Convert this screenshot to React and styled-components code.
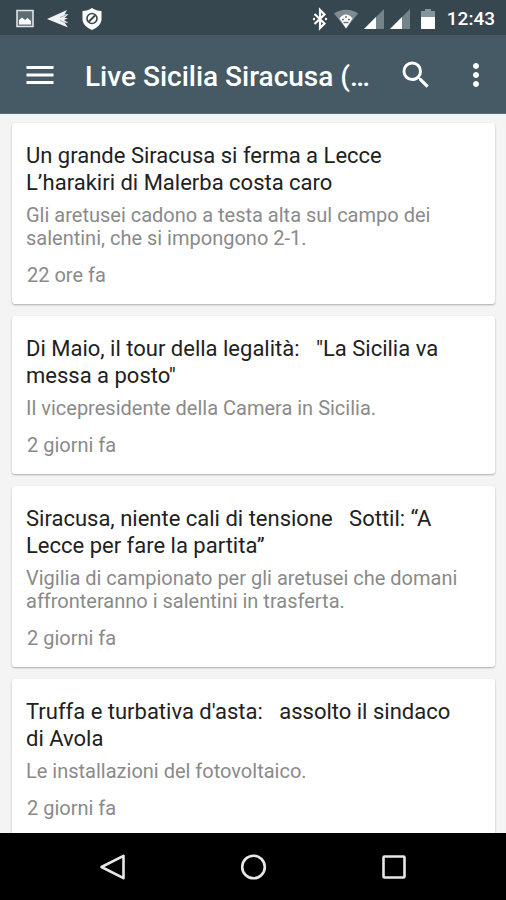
import React from "react";
import styled, { createGlobalStyle } from "styled-components";
import { MdMenu, MdMoreVert, MdSearch } from "react-icons/md";

const articles = [
  {
    title: "Un grande Siracusa si ferma a Lecce\nL’harakiri di Malerba costa caro",
    text: "Gli aretusei cadono a testa alta sul campo dei salentini, che si impongono 2-1.",
    time: "22 ore fa",
  },
  {
    title: "Di Maio, il tour della legalità:   \"La Sicilia va messa a posto\"",
    text: "Il vicepresidente della Camera in Sicilia.",
    time: "2 giorni fa",
  },
  {
    title: "Siracusa, niente cali di tensione   Sottil: “A Lecce per fare la partita”",
    text: "Vigilia di campionato per gli aretusei che domani affronteranno i salentini in trasferta.",
    time: "2 giorni fa",
  },
  {
    title: "Truffa e turbativa d'asta:   assolto il sindaco di\u00a0Avola",
    text: "Le installazioni del fotovoltaico.",
    time: "2 giorni fa",
  },
];

const StatusBar = () => (
  <Status>
    <StatusGroup $gap="12px">
      <svg width="20" height="20" viewBox="0 0 20 20">
        <path d="M2 1.5h16v16H2z" fill="#5d6b72" stroke="#dfe3e5" strokeWidth="1.6" />
        <path d="M4 15.500V11l3-2.500 3 2.500 2.500-2 3.500 3v3.500z" fill="#fff" />
      </svg>
      <svg width="22" height="20" viewBox="0 0 22 20">
        <path d="M0 10 20 1 17.500 5.500l4-.5-4 4H21l-4 2 4.500 3-4-.5 3.500 5z" fill="#f1f3f4" />
        <path d="m13 8.500 6-2.500M13 11.500l6 2.500" stroke="#9aa4a9" strokeWidth=".8" />
      </svg>
      <svg width="22" height="24" viewBox="0 0 22 24">
        <path d="M11 1c3 2 6 2.800 9.500 3v8c0 5-4 8.500-9.500 11C5.500 20.500 1.500 17 1.500 12V4C5 3.800 8 3 11 1z" fill="#fff" />
        <circle cx="11" cy="11.500" r="5" fill="none" stroke="#37474f" strokeWidth="1.600" />
        <path d="m8 14.500 6-6" stroke="#37474f" strokeWidth="2" />
      </svg>
    </StatusGroup>
    <StatusGroup $gap="6px">
      <svg width="16" height="24" viewBox="0 0 16 24">
        <path d="m2.500 7 10 9.500-4.500 4.500V3L12.500 7.500 2.500 17" fill="none" stroke="#fff" strokeWidth="2.200" />
        <circle cx="2" cy="12" r="1.200" fill="#fff" />
        <circle cx="14" cy="12" r="1.200" fill="#fff" />
      </svg>
      <svg width="24" height="20" viewBox="0 0 24 20">
        <path d="M0 4.500C7-.5 17-.5 24 4.500L12 19.500z" fill="#7f8b91" />
        <path d="M5.500 9.500c4-5.500 9-5.500 13 0L12 19.500z" fill="#fff" />
        <path d="M8 10.500h2M14 10.500h2M11 8h2M9.500 13.500h5" stroke="#69777e" strokeWidth="1.400" />
      </svg>
      <SignalIcon />
      <SignalIcon />
      <svg width="20" height="22" viewBox="-4 0 20 22">
        <path d="M1 3h4V1h6v2h4v6H1z" fill="#87939a" />
        <path d="M1 9h14v12H1z" fill="#fff" />
      </svg>
      <Clock>12:43</Clock>
    </StatusGroup>
  </Status>
);

const SignalIcon = () => (
  <svg width="20" height="20" viewBox="0 0 20 20">
    <path d="M0 20 20 0v20z" fill="#75838a" />
    <path d="M0 20 12 8v12z" fill="#fff" />
  </svg>
);

const ArticleCard = ({ title, text, time }) => (
  <Card>
    <CardTitle>{title}</CardTitle>
    <CardText>{text}</CardText>
    <CardTime>{time}</CardTime>
  </Card>
);

const App = () => {
  return (
    <Screen>
      <GlobalStyle />
      <StatusBar />
      <Toolbar>
        <IconButton aria-label="Menu">
          <MdMenu />
        </IconButton>
        <ToolbarTitle>Live Sicilia Siracusa (…</ToolbarTitle>
        <Actions>
          <IconButton aria-label="Cerca">
            <MdSearch />
          </IconButton>
          <IconButton aria-label="Altro">
            <MdMoreVert />
          </IconButton>
        </Actions>
      </Toolbar>
      <ArticleList>
        {articles.map((article) => (
          <ArticleCard key={article.title} {...article} />
        ))}
      </ArticleList>
      <NavBar>
        <NavButton aria-label="Indietro">
          <svg width="28" height="28" viewBox="0 0 28 28">
            <path d="M3.500 14 25.500 2.800v22.400z" />
          </svg>
        </NavButton>
        <NavButton aria-label="Home">
          <svg width="28" height="28" viewBox="0 0 28 28">
            <circle cx="14.500" cy="14" r="11.300" />
          </svg>
        </NavButton>
        <NavButton aria-label="Recenti">
          <svg width="28" height="28" viewBox="0 0 28 28">
            <rect x="3.500" y="3.500" width="21" height="21" rx="1" />
          </svg>
        </NavButton>
      </NavBar>
    </Screen>
  );
};

const GlobalStyle = createGlobalStyle`
  * {
    box-sizing: border-box;
  }

  body {
    margin: 0;
    font-family: Roboto, "Noto Sans", sans-serif;
  }

  button {
    padding: 0;
    border: 0;
    background: none;
  }

  svg {
    display: block;
  }
`;

const Screen = styled.div`
  display: flex;
  flex-direction: column;
  height: 100vh;
  background: #f4f4f4;
`;

const Status = styled.div`
  display: flex;
  flex: none;
  align-items: center;
  justify-content: space-between;
  height: 35px;
  padding: 2px 11px 0 15px;
  background: #37474f;
`;

const StatusGroup = styled.div`
  display: flex;
  align-items: center;
  gap: ${({ $gap }) => $gap};
`;

const Clock = styled.span`
  margin-left: 5px;
  color: #fff;
  font-size: 19px;
  font-weight: 500;
`;

const Toolbar = styled.header`
  display: flex;
  flex: none;
  align-items: center;
  height: 79px;
  padding: 1px 12px 0 22px;
  background: #455a64;
  border-bottom: 1px solid #5c6d76;
`;

const ToolbarTitle = styled.h1`
  flex: 1;
  min-width: 0;
  margin: 0 0 0 27px;
  padding-top: 4px;
  overflow: hidden;
  color: #fff;
  font-size: 28px;
  font-weight: 500;
  line-height: 36px;
  white-space: nowrap;
`;

const Actions = styled.div`
  display: flex;
  gap: 24px;
`;

const IconButton = styled.button`
  color: #fff;
  font-size: 36px;
`;

const ArticleList = styled.main`
  display: flex;
  flex: 1;
  flex-direction: column;
  gap: 12px;
  min-height: 0;
  padding: 9px 11px 0 12px;
  overflow: hidden;
`;

const Card = styled.article`
  flex: none;
  padding: 19px 14px 17px;
  background: #fff;
  border-radius: 3px;
  box-shadow: 0 1px 2px rgba(0, 0, 0, 0.3);
`;

const CardTitle = styled.h2`
  margin: 0;
  color: #212121;
  font-size: 22px;
  font-weight: 400;
  line-height: 27px;
  white-space: pre-wrap;
`;

const CardText = styled.p`
  margin: 8px 0 14px;
  color: #8a8a8a;
  font-size: 20px;
  line-height: 23px;
`;

const CardTime = styled.p`
  margin: 0;
  padding-left: 1px;
  color: #8a8a8a;
  font-size: 20px;
  line-height: 23px;
`;

const NavBar = styled.nav`
  display: flex;
  flex: none;
  align-items: center;
  justify-content: center;
  gap: 113px;
  height: 67px;
  background: #000;
`;

const NavButton = styled.button`
  svg {
    fill: none;
    stroke: #e8e8e8;
    stroke-width: 2.6;
    stroke-linejoin: round;
  }
`;

export default App;
